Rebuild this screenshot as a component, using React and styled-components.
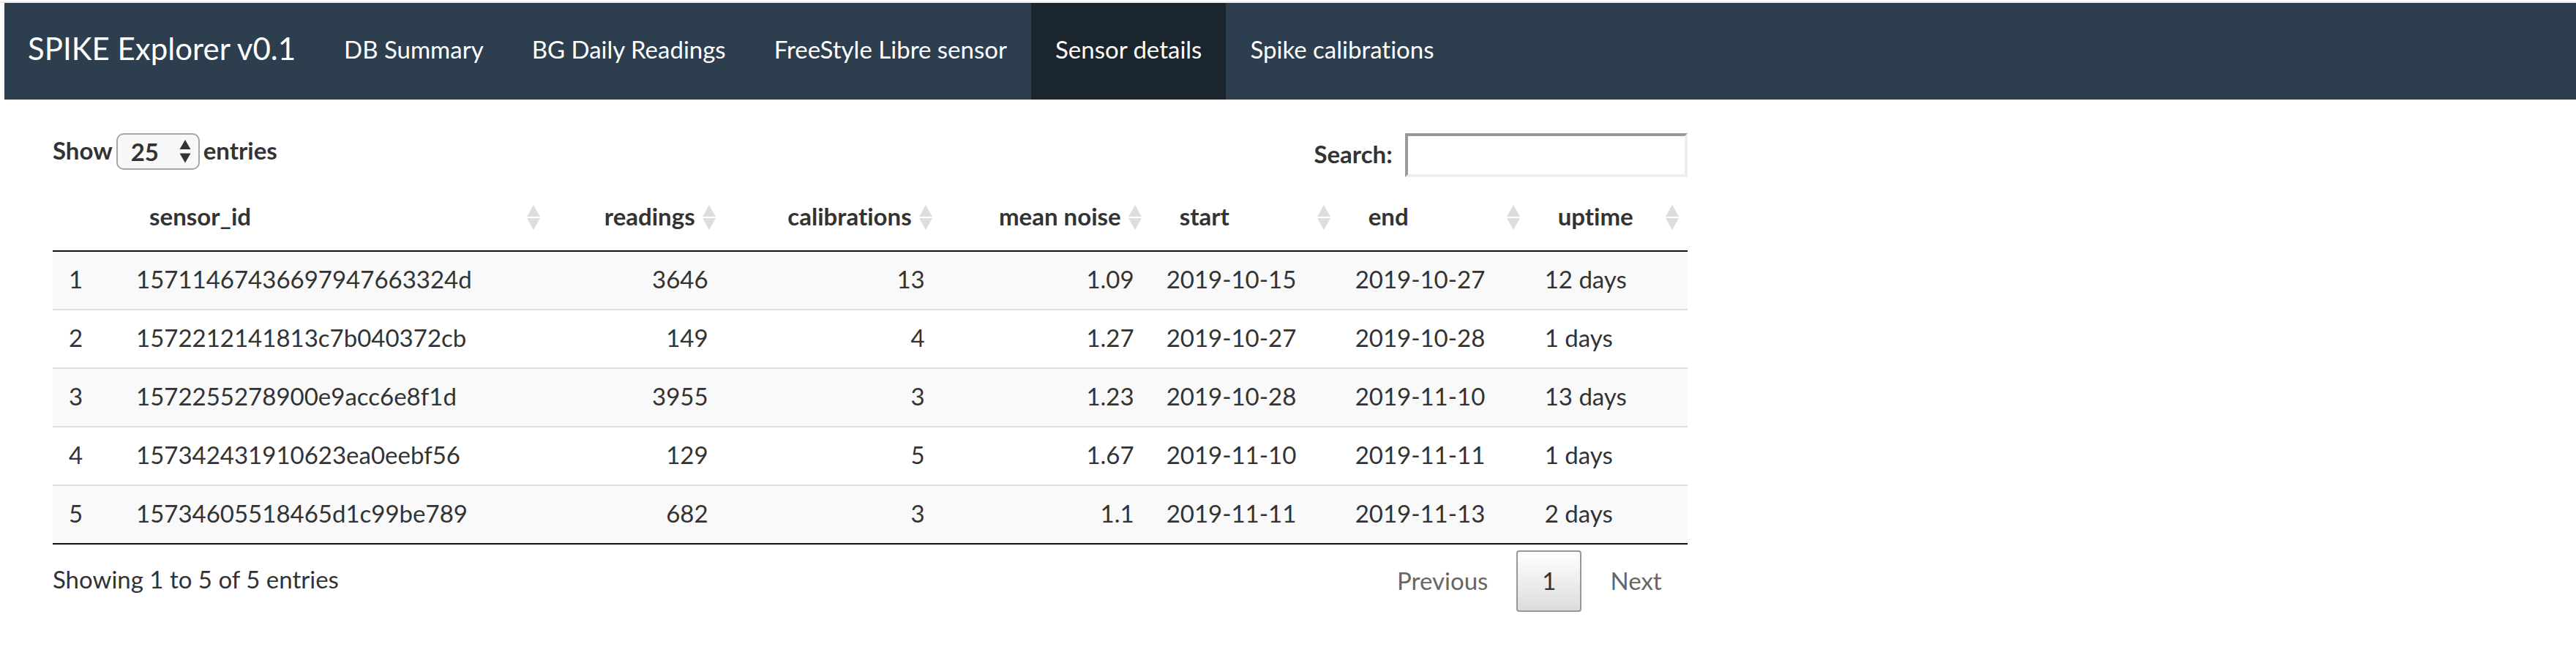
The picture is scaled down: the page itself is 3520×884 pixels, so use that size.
import React, { useState } from "react";
import styled, { createGlobalStyle, css } from "styled-components";

const GlobalStyle = createGlobalStyle`
  *, *::before, *::after { box-sizing: border-box; }
  body {
    margin: 0;
    background: #fff;
    color: #333;
    font-family: Lato, "Liberation Sans", sans-serif;
    font-size: 33px;
    line-height: 46px;
    font-variant-ligatures: none;
    text-rendering: optimizeLegibility;
  }
  button, input, select {
    font: inherit;
    font-variant-ligatures: none;
    text-rendering: inherit;
    color: inherit;
  }
`;

const Page = styled.div`
  border-top: 2px solid #fcfcfc;
`;

const NavBar = styled.nav`
  display: flex;
  border-top: 2px solid #e8eaed;
  padding-left: 6px;
`;

const NavInner = styled.div`
  display: flex;
  flex: 1;
  background: #2d3e4f;
  white-space: nowrap;
`;

const Brand = styled.a`
  padding: 39px 33px 47px 32px;
  font-size: 42px;
  color: #fff;
  text-decoration: none;
`;

const NavList = styled.ul`
  display: flex;
  margin: 0;
  padding: 0;
  list-style: none;
`;

const NavLink = styled.a`
  display: block;
  height: 100%;
  padding: 40px 33px 46px;
  color: #fff;
  text-decoration: none;
  background: ${(p) => (p.$active ? "#1b252e" : "transparent")};
`;

const Container = styled.main`
  padding: 46px 33px 48px 39px;
`;

const Panel = styled.section`
  width: 66.6667%;
  min-width: 1900px;
  padding: 0 32px 0 33px;
`;

const Toolbar = styled.div`
  display: flex;
  align-items: flex-start;
  justify-content: space-between;
  margin-bottom: 10px;
`;

const LengthLabel = styled.label`
  display: flex;
  align-items: center;
  gap: 5px;
  font-weight: 700;
`;

const LabelText = styled.span`
  padding-bottom: 4px;
`;

const SelectBox = styled.span`
  position: relative;
  display: block;
`;

const LengthSelect = styled.select`
  display: block;
  appearance: none;
  width: 114px;
  height: 50px;
  padding: 0 32px 4px 18px;
  border: 2px solid #a6a6a6;
  border-radius: 10px;
  background: #f8f8f8;
`;

const Stepper = styled.svg`
  position: absolute;
  top: 9px;
  right: 12px;
  pointer-events: none;
`;

const SearchLabel = styled.label`
  display: flex;
  align-items: center;
  gap: 17px;
  font-weight: 700;
`;

const SearchInput = styled.input`
  width: 386px;
  height: 60px;
  padding: 0 8px;
  border: 4px solid;
  border-color: #9a9a9a #eee #eee #9a9a9a;
  border-radius: 0;
  background: #fff;
  outline: none;
  font-weight: 400;
`;

const Table = styled.table`
  width: 100%;
  table-layout: fixed;
  border-collapse: separate;
  border-spacing: 0;
  border-bottom: 2px solid #111;
`;

const Column = styled.col`
  width: ${(p) => (p.$width ? `${p.$width}px` : "auto")};
`;

const HeadCell = styled.th`
  padding: 0;
  border-bottom: 2px solid #111;
`;

const SortButton = styled.button`
  display: flex;
  align-items: center;
  gap: 10px;
  width: 100%;
  padding: 20px 12px 20px 40px;
  border: 0;
  background: none;
  font-weight: 700;
  text-align: ${(p) => (p.$numeric ? "right" : "left")};
  white-space: nowrap;
  cursor: pointer;

  svg { flex: none; }
`;

const SortLabel = styled(LabelText)`
  flex: 1;
`;

const cell = css`
  padding: 14px 22px 18px;
  font-weight: 400;
  text-align: ${(p) => (p.$numeric ? "right" : "left")};
  white-space: nowrap;
`;

const RowHead = styled.th`${cell}`;
const Cell = styled.td`${cell}`;

const Row = styled.tr`
  &:nth-child(odd) { background: #f9f9f9; }
  & + & > * { border-top: 2px solid #ddd; }
`;

const Footer = styled.div`
  display: flex;
  align-items: flex-start;
  justify-content: space-between;
`;

const Info = styled.div`
  padding-top: 24px;
`;

const Pager = styled.div`
  display: flex;
  gap: 4px;
  padding-top: 8px;
`;

const PageButton = styled.button`
  height: 84px;
  padding: 0 33px 2px;
  border: 2px solid transparent;
  border-radius: 4px;
  background: transparent;
  color: #666;

  ${(p) =>
    p.$current &&
    css`
      border-color: #979797;
      background: linear-gradient(to bottom, #fff 0%, #dcdcdc 100%);
      color: #333;
    `}
`;

const links = [
  "DB Summary",
  "BG Daily Readings",
  "FreeStyle Libre sensor",
  "Sensor details",
  "Spike calibrations",
];

const columns = [
  { key: "sensor_id" },
  { key: "readings", width: 240, numeric: true },
  { key: "calibrations", width: 296, numeric: true },
  { key: "mean noise", width: 286, numeric: true },
  { key: "start", width: 258 },
  { key: "end", width: 259 },
  { key: "uptime", width: 217 },
];

const rows = [
  ["15711467436697947663324d", "3646", "13", "1.09", "2019-10-15", "2019-10-27", "12 days"],
  ["1572212141813c7b040372cb", "149", "4", "1.27", "2019-10-27", "2019-10-28", "1 days"],
  ["1572255278900e9acc6e8f1d", "3955", "3", "1.23", "2019-10-28", "2019-11-10", "13 days"],
  ["157342431910623ea0eebf56", "129", "5", "1.67", "2019-11-10", "2019-11-11", "1 days"],
  ["15734605518465d1c99be789", "682", "3", "1.1", "2019-11-11", "2019-11-13", "2 days"],
];

function SortIcon() {
  return (
    <svg width="18" height="34" viewBox="0 0 18 34" fill="#ddd" aria-hidden="true">
      <path d="M9 0 18 16H0zM0 18h18L9 34z" />
    </svg>
  );
}

export default function App() {
  const [length, setLength] = useState("25");
  const [query, setQuery] = useState("");
  return (
    <Page>
      <GlobalStyle />
      <NavBar>
        <NavInner>
          <Brand href="#">SPIKE Explorer v0.1</Brand>
          <NavList>
            {links.map((text) => (
              <li key={text}>
                <NavLink href="#" $active={text === "Sensor details"}>{text}</NavLink>
              </li>
            ))}
          </NavList>
        </NavInner>
      </NavBar>
      <Container>
        <Panel>
          <Toolbar>
            <LengthLabel>
              <LabelText>Show</LabelText>
              <SelectBox>
                <LengthSelect value={length} onChange={(e) => setLength(e.target.value)}>
                  <option>10</option>
                  <option>25</option>
                  <option>50</option>
                  <option>100</option>
                </LengthSelect>
                <Stepper width="16" height="32" viewBox="0 0 16 32" fill="#333" aria-hidden="true">
                  <path d="M8 0 15.500 13H.5zM.5 18.500h15L8 31.500z" />
                </Stepper>
              </SelectBox>
              <LabelText>entries</LabelText>
            </LengthLabel>
            <SearchLabel>
              <LabelText>Search:</LabelText>
              <SearchInput type="search" value={query} onChange={(e) => setQuery(e.target.value)} />
            </SearchLabel>
          </Toolbar>
          <Table>
            <colgroup>
              <Column $width={92} />
              {columns.map((c) => <Column key={c.key} $width={c.width} />)}
            </colgroup>
            <thead>
              <tr>
                <HeadCell as="td" />
                {columns.map((c) => (
                  <HeadCell key={c.key} scope="col">
                    <SortButton type="button" $numeric={c.numeric}>
                      <SortLabel>{c.key}</SortLabel>
                      <SortIcon />
                    </SortButton>
                  </HeadCell>
                ))}
              </tr>
            </thead>
            <tbody>
              {rows.map((row, i) => (
                <Row key={row[0]}>
                  <RowHead scope="row">{i + 1}</RowHead>
                  {row.map((value, j) => (
                    <Cell key={columns[j].key} $numeric={columns[j].numeric}>{value}</Cell>
                  ))}
                </Row>
              ))}
            </tbody>
          </Table>
          <Footer>
            <Info>Showing 1 to 5 of 5 entries</Info>
            <Pager>
              <PageButton type="button">Previous</PageButton>
              <PageButton type="button" $current aria-current="page">1</PageButton>
              <PageButton type="button">Next</PageButton>
            </Pager>
          </Footer>
        </Panel>
      </Container>
    </Page>
  );
}
